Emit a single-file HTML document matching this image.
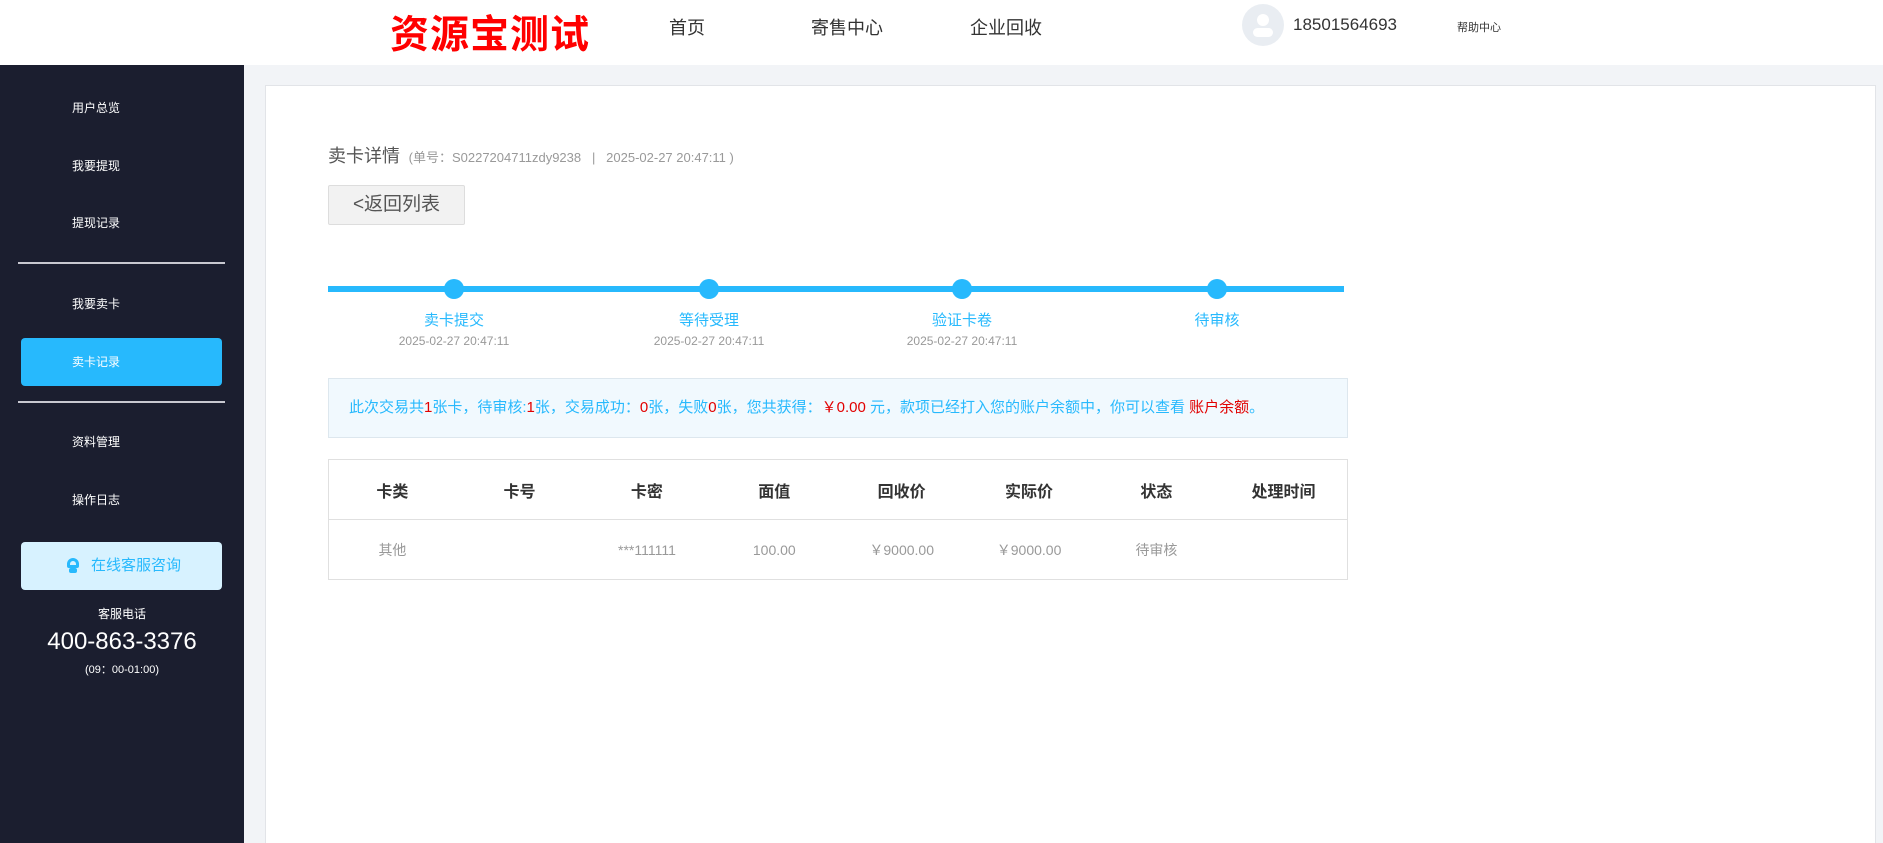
<!DOCTYPE html>
<html><head><meta charset="utf-8"><style>
*{margin:0;padding:0;box-sizing:border-box}
html,body{width:1883px;height:843px;overflow:hidden}
body{background:#f2f4f7;font-family:"Liberation Sans","Noto Sans CJK SC",sans-serif;position:relative}
.a{position:absolute;white-space:nowrap}
.hd{position:absolute;left:0;top:0;width:1883px;height:65px;background:#fff}
.sb{position:absolute;left:0;top:65px;width:244px;height:778px;background:#1b1e2f}
.si{position:absolute;left:72px;color:#fff;font-size:12px;line-height:14px}
.dv{position:absolute;left:18px;width:207px;height:2px;background:#c8c8d0}
.card{position:absolute;left:265px;top:85px;width:1611px;height:758px;background:#fff;border:1px solid #e2e4e8;border-bottom:none}
.dot{position:absolute;top:279px;width:20px;height:20px;border-radius:50%;background:#27b9fd}
.lb{position:absolute;top:309px;width:200px;text-align:center;color:#27b9fd;font-size:15px}
.dt{position:absolute;top:334px;width:200px;text-align:center;color:#999;font-size:12px}
.r{color:#e10000}
table{position:absolute;left:328px;top:459px;width:1020px;border-collapse:collapse;border:1px solid #e0e0e0;table-layout:fixed}
td,th{text-align:center;height:60px}
th{font-size:16px;color:#333;font-weight:bold;border-bottom:1px solid #e0e0e0}
td{font-size:14px;color:#999}
</style></head><body>
<div class="hd">
<div class="a" style="left:390px;top:4px;font-size:39px;font-weight:bold;color:#f00;letter-spacing:1px">资源宝测试</div>
<div class="a" style="left:669px;top:14px;font-size:18px;color:#333">首页</div>
<div class="a" style="left:811px;top:14px;font-size:18px;color:#333">寄售中心</div>
<div class="a" style="left:970px;top:14px;font-size:18px;color:#333">企业回收</div>
<div class="a" style="left:1242px;top:4px;width:42px;height:42px;border-radius:50%;background:#e9edf2">
<div style="position:absolute;left:15px;top:10px;width:12px;height:12px;border-radius:50%;background:#fff"></div>
<div style="position:absolute;left:11px;top:24px;width:20px;height:9px;border-radius:5px;background:#fff"></div></div>
<div class="a" style="left:1293px;top:15px;font-size:17px;color:#333">18501564693</div>
<div class="a" style="left:1457px;top:19px;font-size:11px;color:#333">帮助中心</div>
</div>
<div class="sb"></div>
<div class="si" style="top:101px">用户总览</div>
<div class="si" style="top:159px">我要提现</div>
<div class="si" style="top:216px">提现记录</div>
<div class="dv" style="top:262px"></div>
<div class="si" style="top:297px">我要卖卡</div>
<div class="a" style="left:21px;top:338px;width:201px;height:48px;border-radius:4px;background:#27b9fd"></div>
<div class="si" style="top:355px">卖卡记录</div>
<div class="dv" style="top:401px"></div>
<div class="si" style="top:435px">资料管理</div>
<div class="si" style="top:493px">操作日志</div>
<div class="a" style="left:21px;top:542px;width:201px;height:48px;border-radius:4px;background:#d7f2ff;color:#27b9fd;font-size:15px;line-height:48px;padding-left:70px">在线客服咨询</div>
<div class="a" style="left:67px;top:558px;width:12px;height:14px"><div style="width:12px;height:10px;border-radius:6px 6px 2px 2px;border:3px solid #27b9fd"></div><div style="width:8px;height:5px;margin-left:2px;background:#27b9fd;border-radius:2px"></div></div>
<div class="a" style="left:0;width:244px;text-align:center;top:605px;color:#fff;font-size:12px">客服电话</div>
<div class="a" style="left:0;width:244px;text-align:center;top:628px;color:#fff;font-size:24px">400-863-3376</div>
<div class="a" style="left:0;width:244px;text-align:center;top:661px;color:#fff;font-size:11px">(09：00-01:00)</div>

<div class="card"></div>
<div class="a" style="left:328px;top:142px;font-size:18px;color:#555">卖卡详情 <span style="font-size:13px;color:#999">&nbsp;(单号：S0227204711zdy9238 &nbsp; | &nbsp; 2025-02-27 20:47:11 )</span></div>
<div class="a" style="left:328px;top:185px;width:137px;height:40px;background:#f2f2f2;border:1px solid #ddd;border-radius:2px;font-size:19px;color:#555;line-height:38px;text-align:center">&lt;返回列表</div>
<div class="a" style="left:328px;top:286px;width:1016px;height:6px;background:#27b9fd"></div>
<div class="dot" style="left:444px"></div><div class="dot" style="left:699px"></div><div class="dot" style="left:952px"></div><div class="dot" style="left:1207px"></div>
<div class="lb" style="left:354px">卖卡提交</div><div class="lb" style="left:609px">等待受理</div><div class="lb" style="left:862px">验证卡卷</div><div class="lb" style="left:1117px">待审核</div>
<div class="dt" style="left:354px">2025-02-27 20:47:11</div><div class="dt" style="left:609px">2025-02-27 20:47:11</div><div class="dt" style="left:862px">2025-02-27 20:47:11</div>
<div class="a" style="left:328px;top:378px;width:1020px;height:60px;background:#f1f9fe;border:1px solid #dde7ee;color:#27b9fd;font-size:15px;line-height:58px;padding-left:20px">此次交易共<span class="r">1</span>张卡，待审核:<span class="r">1</span>张，交易成功：<span class="r">0</span>张，失败<span class="r">0</span>张，您共获得：<span class="r">￥0.00</span> 元，款项已经打入您的账户余额中，你可以查看 <span class="r">账户余额</span>。</div>
<table><tr><th>卡类</th><th>卡号</th><th>卡密</th><th>面值</th><th>回收价</th><th>实际价</th><th>状态</th><th>处理时间</th></tr>
<tr><td>其他</td><td></td><td>***111111</td><td>100.00</td><td>￥9000.00</td><td>￥9000.00</td><td>待审核</td><td></td></tr></table>
</body></html>
